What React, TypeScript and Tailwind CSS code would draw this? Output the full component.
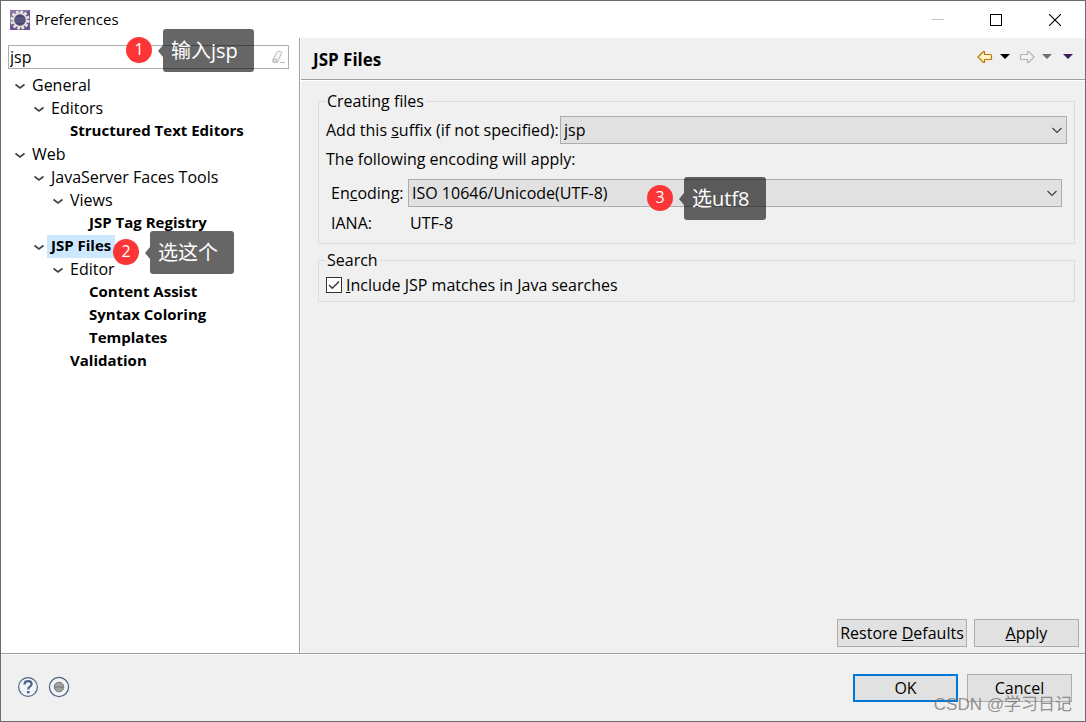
import type { ReactNode } from 'react';

type TreeNode = {
  label: string;
  bold?: boolean;
  selected?: boolean;
  children?: TreeNode[];
};

const tree: TreeNode[] = [
  {
    label: 'General',
    children: [
      {
        label: 'Editors',
        children: [{ label: 'Structured Text Editors', bold: true }],
      },
    ],
  },
  {
    label: 'Web',
    children: [
      {
        label: 'JavaServer Faces Tools',
        children: [
          {
            label: 'Views',
            children: [{ label: 'JSP Tag Registry', bold: true }],
          },
        ],
      },
      {
        label: 'JSP Files',
        bold: true,
        selected: true,
        children: [
          {
            label: 'Editor',
            children: [
              { label: 'Content Assist', bold: true },
              { label: 'Syntax Coloring', bold: true },
              { label: 'Templates', bold: true },
            ],
          },
          { label: 'Validation', bold: true },
        ],
      },
    ],
  },
];

const TreeList = ({ nodes, nested = false }: { nodes: TreeNode[]; nested?: boolean }) => (
  <ul className={nested ? 'pl-[19px]' : ''}>
    {nodes.map((node) => (
      <li key={node.label}>
        <div className="flex h-[23px] items-center">
          {node.children ? (
            <button type="button" aria-label={`Collapse ${node.label}`} className="flex w-5 shrink-0 justify-end pr-0.5">
              <svg width="12" height="8" viewBox="0 0 12 8" fill="none" stroke="#404040" strokeWidth="1.6">
                <path d="M1.5 2.5 L6 6 L10.5 2.5" />
              </svg>
            </button>
          ) : (
            <span className="w-5 shrink-0" />
          )}
          <span
            className={`px-1 whitespace-nowrap ${
              node.bold ? 'pb-0.5 text-[15px] leading-[21px] font-bold' : 'leading-[23px]'
            } ${node.selected ? 'bg-[#cce8ff]' : ''}`}
          >
            {node.label}
          </span>
        </div>
        {node.children && <TreeList nodes={node.children} nested />}
      </li>
    ))}
  </ul>
);

const SelectBox = ({ id, value }: { id: string; value: string }) => (
  <div className="relative min-w-0 flex-1">
    <select
      id={id}
      className="block h-7 w-full appearance-none border border-[#adadad] bg-[#e1e1e1] pl-[3px] text-black"
    >
      <option>{value}</option>
    </select>
    <svg
      className="pointer-events-none absolute top-2.5 right-1"
      width="12"
      height="8"
      viewBox="0 0 12 8"
      fill="none"
      stroke="#404040"
      strokeWidth="1.2"
    >
      <path d="M1.5 2 L6 6.5 L10.5 2" />
    </svg>
  </div>
);

const PushButton = ({ children, className }: { children: ReactNode; className: string }) => (
  <button type="button" className={`h-7 bg-[#e1e1e1] text-center leading-6 ${className}`}>
    {children}
  </button>
);

// Numbered marker with a speech bubble on its right
const Callout = ({ num, text, className }: { num: number; text: string; className: string }) => (
  <div className={`pointer-events-none absolute z-10 flex items-center ${className}`}>
    <span className="mb-0.5 flex size-[26px] items-center justify-center rounded-full bg-[#fc3636] pb-0.5 text-base text-white">
      {num}
    </span>
    <svg className="ml-[6px]" width="5" height="12" viewBox="0 0 5 12" fill="#000" fillOpacity="0.6">
      <path d="M0 6 L5 0 V12 Z" />
    </svg>
    <span className="h-[43px] rounded-[3px] bg-black/60 pr-4 pl-2 text-xl leading-[43px] whitespace-nowrap text-white">
      {text}
    </span>
  </div>
);

const EclipseIcon = () => (
  <svg width="20" height="20" viewBox="0 0 20 20">
    <rect width="20" height="20" fill="#65548f" />
    <path d="M0 0 H20 L0 14 Z" fill="#8776ac" />
    <circle cx="10" cy="10" r="8.2" fill="none" stroke="#ece8e2" strokeWidth="2.8" strokeDasharray="2.7 1.59" />
    <circle cx="10" cy="10" r="6.6" fill="#4a4570" stroke="#dedad4" strokeWidth="1.8" />
    <path d="M5.5 8 H14.5 M5 10 H15 M5.5 12 H14.5" stroke="#6a6590" strokeWidth="1" />
  </svg>
);

const App = () => {
  return (
    <div className="relative flex h-screen w-full flex-col border border-[#6b6b6b] bg-white font-['Open_Sans','Noto_Sans_CJK_SC',sans-serif] text-base leading-6 text-black">
      {/* Title bar */}
      <header className="flex h-[37px] shrink-0 items-center pl-[9px]">
        <EclipseIcon />
        <h1 className="ml-[5px] flex-1 pb-0.5 text-[15px]">Preferences</h1>
        <div className="flex">
          <button type="button" aria-label="Minimize" className="flex h-9 w-[58px] items-center justify-center">
            <svg width="12" height="12" stroke="#c4c4c4">
              <path d="M0 5.5 H12" />
            </svg>
          </button>
          <button type="button" aria-label="Maximize" className="flex h-9 w-[58px] items-center justify-center">
            <svg width="12" height="12" fill="none" stroke="#000">
              <rect x="0.5" y="0.5" width="11" height="11" />
            </svg>
          </button>
          <button type="button" aria-label="Close" className="flex h-9 w-[60px] items-center justify-center">
            <svg width="12" height="12" stroke="#000" strokeWidth="1.1">
              <path d="M0 0 L12 12 M12 0 L0 12" />
            </svg>
          </button>
        </div>
      </header>

      <div className="flex min-h-0 flex-1">
        {/* Filter and tree */}
        <aside className="w-[299px] shrink-0 border-r border-[#a0a0a0] pt-[7px] pl-[7px]">
          <div className="mr-[10px] flex h-6 items-center border border-[#abadb3]">
            <input
              type="text"
              aria-label="Filter text"
              defaultValue="jsp"
              className="h-full min-w-0 flex-1 pl-px outline-none"
            />
            <button type="button" aria-label="Clear" className="mr-0.5">
              <svg width="15" height="14" viewBox="0 0 15 14" fill="#f6f6f6" stroke="#bcbcbc">
                <path d="M2 9.5 L5.5 2.5 Q6 1.5 7 1.5 H9.5 Q11 1.5 10.5 3 L7.5 10.5 Q7 12.5 5.5 12.5 H3 Q1.2 12.5 2 9.5 Z" />
                <path d="M2.5 9 H5 Q6.5 9 6.5 12 Q5.5 12.5 3 12.5 Q1.2 12.5 2.5 9 Z" fill="#dcdcdc" />
                <path d="M9 12.5 H14" fill="none" />
              </svg>
            </button>
          </div>
          <nav className="mt-[5px]">
            <TreeList nodes={tree} />
          </nav>
        </aside>

        {/* Page */}
        <main className="ml-px flex min-w-0 flex-1 flex-col bg-[#f0f0f0]">
          <div className="flex h-[42px] shrink-0 items-center border-b border-[#a0a0a0] px-3">
            <h2 className="flex-1 pt-0.5 text-[17px] font-bold">JSP Files</h2>
            <div className="mb-1 flex items-center">
              <button type="button" aria-label="Back">
                <svg width="16" height="14" viewBox="0 0 16 14" fill="#fff3c4" stroke="#b8770b" strokeWidth="1.2" strokeLinejoin="round">
                  <path d="M1 7 L6.5 1.5 H7.5 V4.5 H13.5 Q14.5 4.5 14.5 5.5 V8.5 Q14.5 9.5 13.5 9.5 H7.5 V12.5 H6.5 Z" />
                </svg>
              </button>
              <button type="button" aria-label="Back history" className="ml-[7px]">
                <svg width="10" height="5" viewBox="0 0 10 5">
                  <path d="M0 0 H10 L5 5 Z" fill="#000" />
                </svg>
              </button>
              <button type="button" aria-label="Forward" className="ml-[9px]">
                <svg width="16" height="14" viewBox="0 0 16 14" fill="#f3f3f3" stroke="#b4b4b4" strokeWidth="1.2" strokeLinejoin="round">
                  <path d="M15 7 L9.5 1.5 H8.5 V4.5 H2.5 Q1.5 4.5 1.5 5.5 V8.5 Q1.5 9.5 2.5 9.5 H8.5 V12.5 H9.5 Z" />
                </svg>
              </button>
              <button type="button" aria-label="Forward history" className="ml-[7px]">
                <svg width="10" height="5" viewBox="0 0 10 5">
                  <path d="M0 0 H10 L5 5 Z" fill="#6f6f6f" />
                </svg>
              </button>
              <button type="button" aria-label="View menu" className="ml-[11px]">
                <svg width="10" height="5" viewBox="0 0 10 5">
                  <path d="M0 0 H10 L5 5 Z" fill="#3b1d5c" />
                </svg>
              </button>
            </div>
          </div>

          <div className="flex flex-1 flex-col border-t border-white">
            <div className="flex-1 pt-2 pr-[10px] pl-[17px]">
              <fieldset className="border border-[#dcdcdc] px-[7px] pt-[3px] pb-2">
                <legend className="-ml-px px-0.5">Creating files</legend>
                <div className="flex items-center">
                  <label htmlFor="suffix" className="w-[234px] shrink-0 whitespace-nowrap">
                    Add this <u>s</u>uffix (if not specified):
                  </label>
                  <SelectBox id="suffix" value="jsp" />
                </div>
                <p className="mt-[3px]">The following encoding will apply:</p>
                <div className="mt-2 flex items-center px-[5px]">
                  <label htmlFor="encoding" className="w-[77px] shrink-0">
                    En<u>c</u>oding:
                  </label>
                  <SelectBox id="encoding" value="ISO 10646/Unicode(UTF-8)" />
                </div>
                <div className="mt-1 flex px-[5px]">
                  <span className="w-[79px]">IANA:</span>
                  <span>UTF-8</span>
                </div>
              </fieldset>

              <fieldset className="mt-1 border border-[#dcdcdc] px-[7px] pt-px pb-1">
                <legend className="-ml-px px-0.5">Search</legend>
                <div className="flex items-center">
                  <span className="relative size-4 shrink-0">
                    <input
                      id="include"
                      type="checkbox"
                      defaultChecked
                      className="block size-4 appearance-none border border-[#333] bg-white"
                    />
                    <svg
                      className="pointer-events-none absolute inset-0"
                      width="16"
                      height="16"
                      viewBox="0 0 16 16"
                      fill="none"
                      stroke="#333"
                      strokeWidth="1.4"
                    >
                      <path d="M3 8 L6.3 11.3 L13 4.5" />
                    </svg>
                  </span>
                  <label htmlFor="include" className="ml-1">
                    <u>I</u>nclude JSP matches in Java searches
                  </label>
                </div>
              </fieldset>
            </div>

            <div className="flex justify-end gap-[7px] pr-[6px] pb-[6px]">
              <PushButton className="w-[130px] border border-[#adadad] whitespace-nowrap">
                Restore <u>D</u>efaults
              </PushButton>
              <PushButton className="w-[105px] border border-[#adadad]">
                <u>A</u>pply
              </PushButton>
            </div>
          </div>
        </main>
      </div>

      {/* Dialog buttons */}
      <footer className="shrink-0 border-t border-[#a0a0a0]">
        <div className="flex h-[67px] items-center border-t border-white bg-[#f0f0f0] pr-[13px] pl-4">
          <button type="button" aria-label="Help" className="mb-0.5">
            <svg width="22" height="22" viewBox="0 0 22 22">
              <circle cx="11" cy="11" r="9.4" fill="#f3f4f6" stroke="#4c6389" strokeWidth="1.2" />
              <path
                d="M7.5 8.5 Q7.5 5.2 11.2 5.2 Q14.6 5.2 14.6 8 Q14.6 9.6 12.8 10.6 Q11.2 11.5 11.2 13.4"
                fill="none"
                stroke="#4c6389"
                strokeWidth="2.2"
              />
              <rect x="10" y="15" width="2.5" height="2.3" fill="#4c6389" />
            </svg>
          </button>
          <button type="button" aria-label="Record" className="mb-0.5 ml-[9px]">
            <svg width="22" height="22" viewBox="0 0 22 22">
              <circle cx="11" cy="11" r="9.6" fill="#f3f4f6" stroke="#4c6389" strokeWidth="1.2" />
              <circle cx="11" cy="11" r="4.8" fill="#a2a2a2" stroke="#777" />
              <path d="M6.5 11 H15.5" stroke="#8a8a8a" strokeWidth="2" />
            </svg>
          </button>
          <div className="ml-auto flex gap-[9px]">
            <PushButton className="w-[105px] border-2 border-[#0078d7]">OK</PushButton>
            <PushButton className="w-[105px] border border-[#adadad]">Cancel</PushButton>
          </div>
        </div>
      </footer>

      <Callout num={1} text="输入jsp" className="top-7 left-[125px]" />
      <Callout num={2} text="选这个" className="top-[230px] left-[112px]" />
      <Callout num={3} text="选utf8" className="top-[176px] left-[646px]" />

      <span className="pointer-events-none absolute right-[13px] bottom-1 font-['Liberation_Sans','Noto_Sans_CJK_SC',sans-serif] text-[17px] text-[#777]/80">
        CSDN @学习日记
      </span>
    </div>
  );
};

export default App;
